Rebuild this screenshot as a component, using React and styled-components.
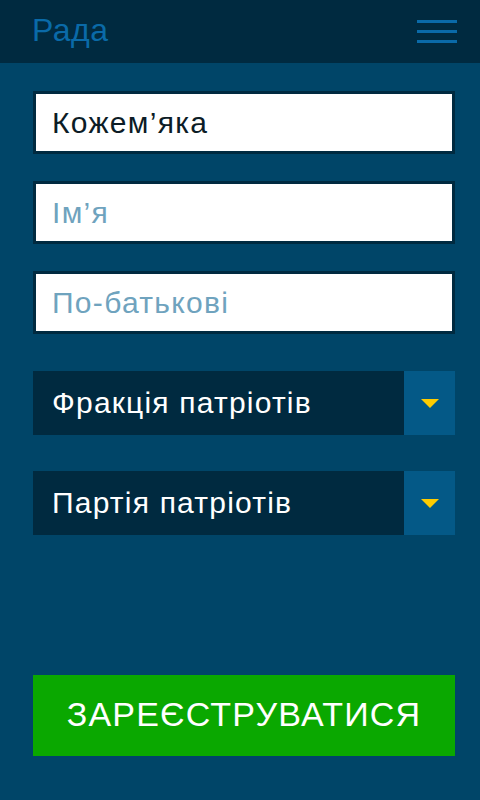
import React from 'react'
import styled, { createGlobalStyle } from 'styled-components'

const GlobalStyle = createGlobalStyle`
  html, body {
    margin: 0;
    padding: 0;
    background: #004568;
    font-family: "Liberation Sans", Arial, sans-serif;
  }
`

const Page = styled.div`
  width: 480px;
  min-height: 800px;
  background: #004568;
`

const Header = styled.header`
  height: 63px;
  background: #002a40;
  display: flex;
  align-items: center;
  justify-content: space-between;
  padding: 0 23px 0 32px;
  box-sizing: border-box;
`

const Title = styled.h1`
  margin: 0;
  font-size: 32px;
  font-weight: normal;
  letter-spacing: 0.5px;
  color: #0a6aa8;
  line-height: 1;
  position: relative;
  top: -2px;
`

const Burger = styled.button`
  width: 40px;
  height: 23px;
  padding: 0;
  border: 0;
  background: none;
  display: flex;
  flex-direction: column;
  justify-content: space-between;
  span {
    display: block;
    height: 3px;
    background: #0a6aa8;
  }
`

const Form = styled.form`
  display: flex;
  flex-direction: column;
  padding: 28px 25px 0 33px;
`

const Input = styled.input`
  height: 63px;
  box-sizing: border-box;
  border: 3px solid #002a40;
  background: #fff;
  padding: 0 16px;
  margin-top: ${p => p.$gap || 0}px;
  font-family: "Liberation Sans", Arial, sans-serif;
  font-size: 30px;
  letter-spacing: 1.3px;
  color: #0c1c26;
  outline: none;
  &::placeholder {
    color: #6fa3be;
  }
`

const Select = styled.div`
  display: flex;
  height: 64px;
  margin-top: ${p => p.$gap || 0}px;
  background: #002a40;
`

const SelectText = styled.div`
  flex: 1;
  display: flex;
  align-items: center;
  padding-left: 19px;
  font-size: 30px;
  letter-spacing: 1.2px;
  color: #fff;
`

const ArrowBox = styled.div`
  width: 51px;
  background: #045987;
  display: flex;
  align-items: center;
  justify-content: center;
`

const Arrow = styled.div`
  width: 0;
  height: 0;
  border-left: 9px solid transparent;
  border-right: 9px solid transparent;
  border-top: 9px solid #ffcc00;
  margin-left: 1px;
`

const Submit = styled.button`
  margin-top: 140px;
  height: 81px;
  border: 0;
  background: #0aa800;
  color: #fff;
  font-family: "Liberation Sans", Arial, sans-serif;
  font-size: 34px;
  letter-spacing: 1.2px;
  text-transform: uppercase;
  padding: 0 0 3px;
  cursor: pointer;
`

function Dropdown({ label, gap }) {
  return (
    <Select $gap={gap}>
      <SelectText>{label}</SelectText>
      <ArrowBox>
        <Arrow />
      </ArrowBox>
    </Select>
  )
}

export default function App() {
  return (
    <Page>
      <GlobalStyle />
      <Header>
        <Title>Рада</Title>
        <Burger aria-label="menu">
          <span />
          <span />
          <span />
        </Burger>
      </Header>
      <Form onSubmit={e => e.preventDefault()}>
        <Input defaultValue="Кожем’яка" />
        <Input $gap={27} placeholder="Ім’я" />
        <Input $gap={27} placeholder="По-батькові" />
        <Dropdown gap={37} label="Фракція патріотів" />
        <Dropdown gap={36} label="Партія патріотів" />
        <Submit type="submit">Зареєструватися</Submit>
      </Form>
    </Page>
  )
}
